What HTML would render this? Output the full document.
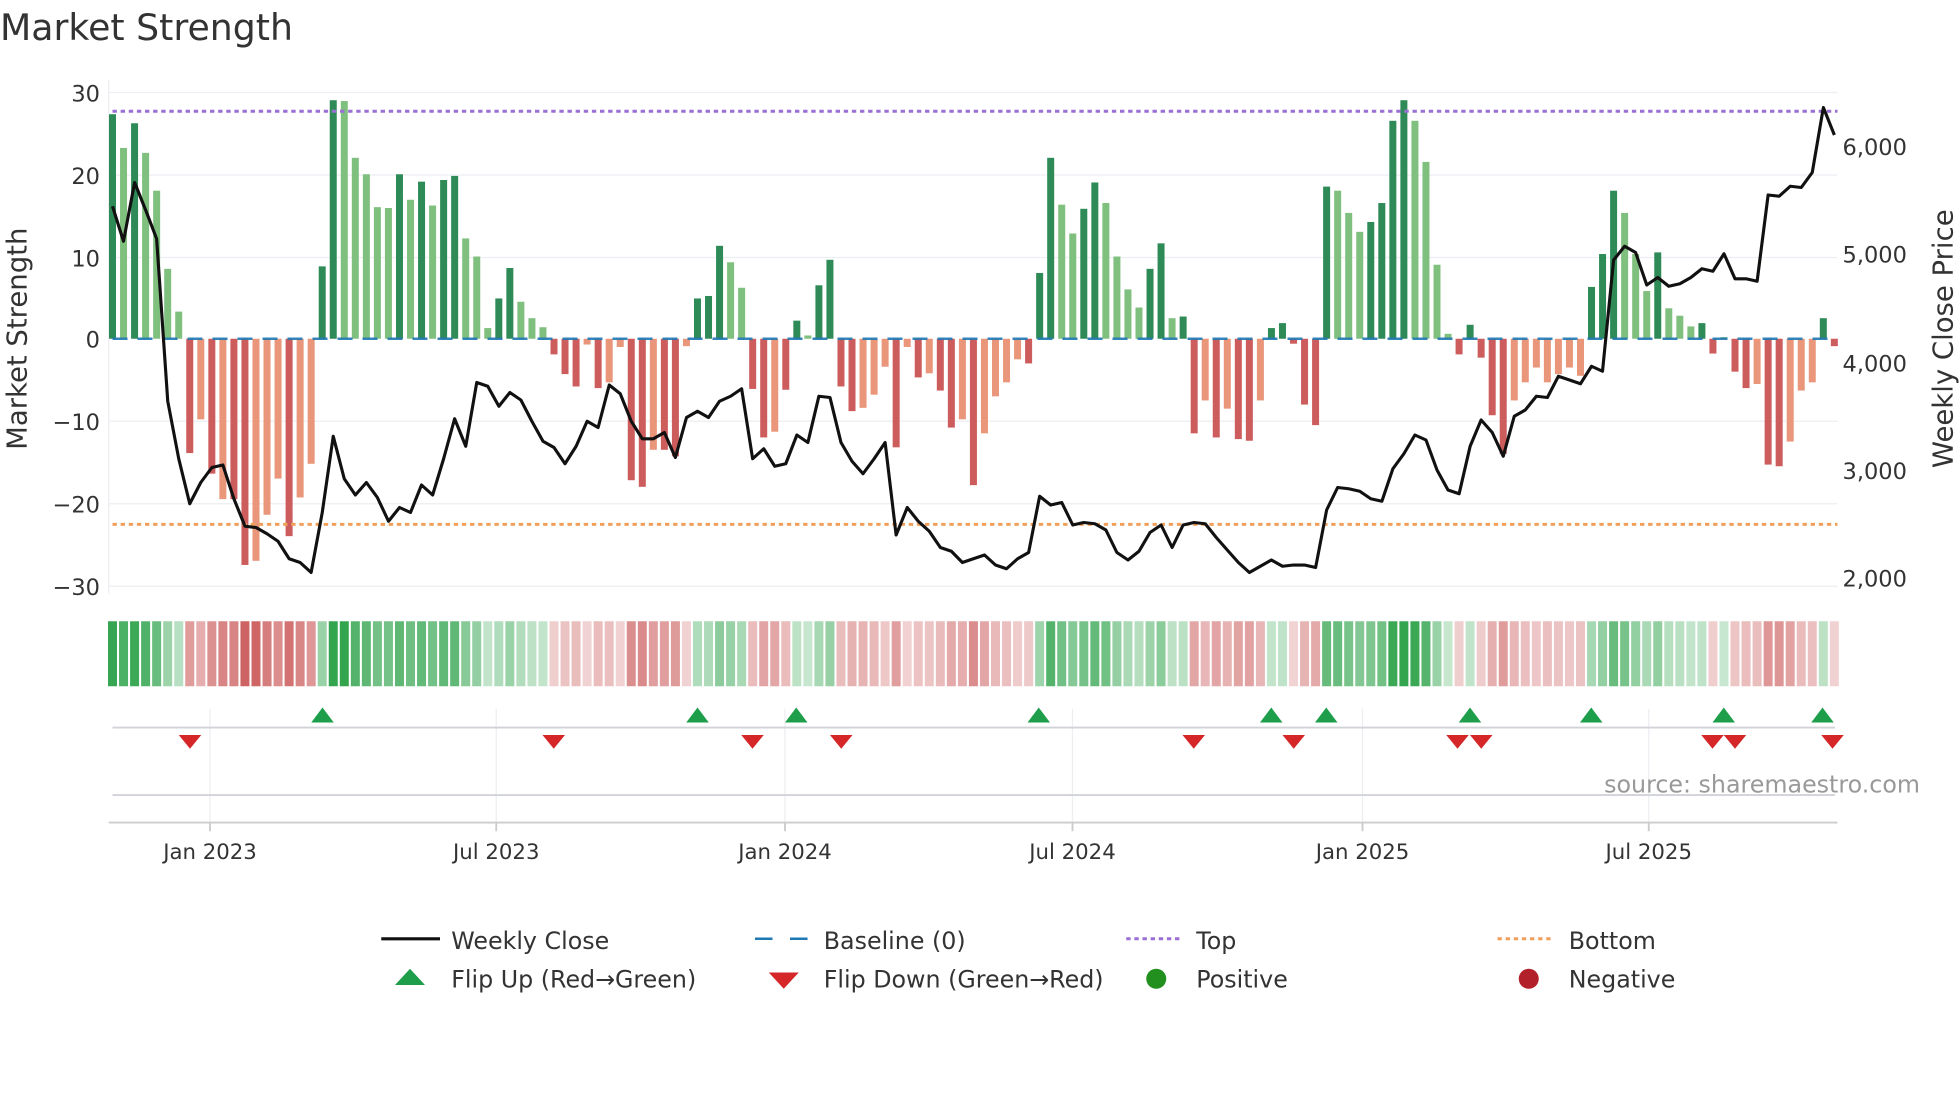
<!DOCTYPE html>
<html><head><meta charset="utf-8">
<style>
html,body{margin:0;padding:0;background:#fff;width:1960px;height:1102px;overflow:hidden}
svg{display:block}
text{font-family:"DejaVu Sans","Liberation Sans",sans-serif;fill:#333}
</style></head>
<body>
<svg id="s" width="1960" height="1102" viewBox="0 0 1568 881.6" xmlns="http://www.w3.org/2000/svg">
<g id="grid" stroke="#eceef2" stroke-width="1">
<line x1="87" x2="1470" y1="74" y2="74"/><line x1="87" x2="1470" y1="140" y2="140"/><line x1="87" x2="1470" y1="206" y2="206"/><line x1="87" x2="1470" y1="337" y2="337"/><line x1="87" x2="1470" y1="403" y2="403"/><line x1="87" x2="1470" y1="469" y2="469"/>
<line x1="168" x2="168" y1="567" y2="658"/><line x1="397" x2="397" y1="567" y2="658"/><line x1="628" x2="628" y1="567" y2="658"/><line x1="858" x2="858" y1="567" y2="658"/><line x1="1090" x2="1090" y1="567" y2="658"/><line x1="1319" x2="1319" y1="567" y2="658"/>
</g>
<line x1="87" x2="87" y1="64" y2="475" stroke="#eceef2"/>
<g id="bars"></g>
<line x1="90" x2="1470" y1="271" y2="271" stroke="#1f77b4" stroke-width="2" stroke-dasharray="12 8" id="base" opacity="0.9"/>
<line x1="90" x2="1470" y1="89" y2="89" stroke="#9b6fd6" stroke-width="2.4" stroke-dasharray="3.5 3"/>
<line x1="90" x2="1470" y1="419.5" y2="419.5" stroke="#f0a05a" stroke-width="2.4" stroke-dasharray="3.5 3"/>
<polyline id="price" fill="none" stroke="#111" stroke-width="2.5" stroke-linejoin="round"/>
<g id="heat"></g>
<line x1="90" x2="1468" y1="582" y2="582" stroke="#d0d3d8" stroke-width="1.5"/>
<line x1="90" x2="1468" y1="636" y2="636" stroke="#d0d3d8" stroke-width="1.5"/>
<line x1="87" x2="1470" y1="658" y2="658" stroke="#ccc" stroke-width="1.5"/>
<g stroke="#ccc" stroke-width="1.5"><line x1="168" x2="168" y1="658" y2="665"/><line x1="397" x2="397" y1="658" y2="665"/><line x1="628" x2="628" y1="658" y2="665"/><line x1="858" x2="858" y1="658" y2="665"/><line x1="1090" x2="1090" y1="658" y2="665"/><line x1="1319" x2="1319" y1="658" y2="665"/></g>
<g id="tri"></g>

<text x="0" y="32" font-size="29">Market Strength</text>
<g font-size="18" text-anchor="end">
<text x="80" y="81">30</text><text x="80" y="147">20</text><text x="80" y="213">10</text><text x="80" y="278">0</text><text x="80" y="344">−10</text><text x="80" y="410">−20</text><text x="80" y="476">−30</text>
</g>
<g font-size="18">
<text x="1474" y="124">6,000</text><text x="1474" y="210">5,000</text><text x="1474" y="297">4,000</text><text x="1474" y="383">3,000</text><text x="1474" y="469">2,000</text>
</g>
<text transform="translate(21,271) rotate(-90)" font-size="22" text-anchor="middle">Market Strength</text>
<text transform="translate(1562,271) rotate(-90)" font-size="22" text-anchor="middle">Weekly Close Price</text>
<g font-size="17" text-anchor="middle">
<text x="168" y="687">Jan 2023</text><text x="397" y="687">Jul 2023</text><text x="628" y="687">Jan 2024</text><text x="858" y="687">Jul 2024</text><text x="1090" y="687">Jan 2025</text><text x="1319" y="687">Jul 2025</text>
</g>
<text x="1536" y="634" font-size="19" text-anchor="end" style="fill:#999">source: sharemaestro.com</text>

<g font-size="19">
<line x1="305" x2="352" y1="751" y2="751" stroke="#111" stroke-width="2.5"/>
<text x="361" y="759">Weekly Close</text>
<line x1="604" x2="646" y1="751" y2="751" stroke="#1f77b4" stroke-width="2" stroke-dasharray="14 14"/>
<text x="659" y="759">Baseline (0)</text>
<line x1="901" x2="945" y1="751" y2="751" stroke="#9b6fd6" stroke-width="2.4" stroke-dasharray="3.5 3"/>
<text x="957" y="759">Top</text>
<line x1="1198" x2="1243" y1="751" y2="751" stroke="#f0a05a" stroke-width="2.4" stroke-dasharray="3.5 3"/>
<text x="1255" y="759">Bottom</text>
<polygon points="316,788 340,788 328,775" fill="#1e9e4a"/>
<text x="361" y="790">Flip Up (Red→Green)</text>
<polygon points="615,778 639,778 627,791" fill="#d62728"/>
<text x="659" y="790">Flip Down (Green→Red)</text>
<circle cx="925" cy="783" r="8" fill="#22901f"/>
<text x="957" y="790">Positive</text>
<circle cx="1223" cy="783" r="8" fill="#b2202a"/>
<text x="1255" y="790">Negative</text>
</g>
</svg>
<script>
var B=[[27.3,1],[23.2,0],[26.2,1],[22.6,0],[18,0],[8.5,0],[3.3,0],[-13.9,1],[-9.8,0],[-16.4,1],[-19.5,0],[-19.5,1],[-27.5,1],[-27,0],[-21.4,0],[-17,0],[-24,1],[-19.3,0],[-15.2,0],
[8.8,1],[29,1],[28.9,0],[22,0],[20,0],[16,0],[15.9,0],[20,1],[16.9,0],[19.1,1],[16.2,0],[19.3,1],[19.8,1],[12.2,0],[10,0],[1.3,0],[4.9,1],[8.6,1],[4.5,0],[2.5,0],[1.4,0],
[-1.9,1],[-4.3,1],[-5.8,1],[-0.7,0],[-6,1],[-5.3,0],[-1,0],[-17.2,1],[-18,1],[-13.5,0],[-13.5,1],[-14.3,1],[-0.9,0],
[4.9,1],[5.2,1],[11.3,1],[9.3,0],[6.2,0],[-6.1,1],[-12,1],[-11.3,0],[-6.2,1],[2.2,1],[0.4,0],[6.5,1],[9.6,1],
[-5.8,1],[-8.8,1],[-8.4,0],[-6.8,0],[-3.4,0],[-13.2,1],[-1,0],[-4.7,1],[-4.2,0],[-6.3,1],[-10.8,1],[-9.8,0],[-17.8,1],
[-11.5,0],[-7,0],[-5.3,0],[-2.5,0],[-3,1],[8,1],[22,1],[16.3,0],[12.8,0],[15.8,1],[19,1],[16.5,0],[10,0],[6,0],[3.8,0],[8.5,1],[11.6,1],[2.5,0],[2.7,1],
[-11.5,1],[-7.5,0],[-12,1],[-8.5,0],[-12.2,1],[-12.4,1],[-7.5,0],[1.3,1],[1.9,1],[-0.6,1],[-8,1],[-10.5,1],
[18.5,1],[18,0],[15.3,0],[13,0],[14.2,1],[16.5,1],[26.5,1],[29,1],[26.5,0],[21.5,0],[9,0],[0.6,0],[-1.9,1],[1.7,1],[-2.3,1],[-9.3,1],[-14,1],[-7.5,0],[-5.3,0],[-3.5,0],[-5.3,0],[-4.3,0],[-3.5,0],[-4.5,0],
[6.3,1],[10.3,1],[18,1],[15.3,0],[10.3,0],[5.8,0],[10.5,1],[3.7,0],[2.8,0],[1.5,0],[1.9,1],[-1.8,1],[0.2,0],[-4,1],[-6,1],[-5.5,0],[-15.3,1],[-15.5,1],[-12.5,0],[-6.3,0],[-5.3,0],[2.5,1],[-0.9,1]];
var P=[165,193,146,168,191,321,367,403,386,374,372,399,421,422,427,433,447,450,458,410,349,383,396,386,398,417,406,410,388,396,367,335,357,306,309,325,314,320,337,353,358,371,357,337,342,308,315,337,351,351,346,366,334,329,334,321,317,311,367,359,373,371,348,354,317,318,354,369,379,367,354,428,406,417,425,438,441,450,447,
444,452,455,447,442,397,404,402,420,418,419,424,442,448,441,426,420,438,420,418,419,430,440,450,458,453,448,453,452,452,454,408,390,391,393,399,401,375,363,348,352,376,392,395,357,336,346,365,333,328,317,318,301,304,307,293,297,208,197,202,228,222,229,227,222,215,217,203,223,223,225,156,157,149,150,138,86,108];
var N="http://www.w3.org/2000/svg",st=8.83,x0=90;
function el(t,a,p){var e=document.createElementNS(N,t);for(var k in a)e.setAttribute(k,a[k]);document.getElementById(p).appendChild(e);}
var u=6.58;
B.forEach(function(b,i){var v=b[0],x=x0+i*st,h=Math.abs(v)*u,c=v>=0?(b[1]?'#2e8b57':'#80c07e'):(b[1]?'#cd5c5c':'#e9967a');
el('rect',{x:x-2.8,y:v>=0?271-h:271,width:5.6,height:h,fill:c},'bars');
var m=Math.min(1,Math.abs(v)/28),a=0.25+0.7*m;
var hc=v>=0?'rgba(40,160,70,'+a+')':'rgba(200,80,80,'+(a*0.95)+')';
el('rect',{x:x-3.6,y:497,width:7.2,height:52,fill:hc},'heat');});
document.getElementById('price').setAttribute('points',P.map(function(y,i){return (x0+i*st).toFixed(1)+','+y}).join(' '));
[258,558,637,831,1017,1061,1176,1273,1379,1458].forEach(function(x){el('polygon',{points:(x-9)+',578 '+(x+9)+',578 '+x+',566',fill:'#1e9e4a'},'tri');});
[152,443,602,673,955,1035,1166,1185,1370,1388,1466].forEach(function(x){el('polygon',{points:(x-9)+',588 '+(x+9)+',588 '+x+',599',fill:'#d62728'},'tri');});
</script>
</body></html>
